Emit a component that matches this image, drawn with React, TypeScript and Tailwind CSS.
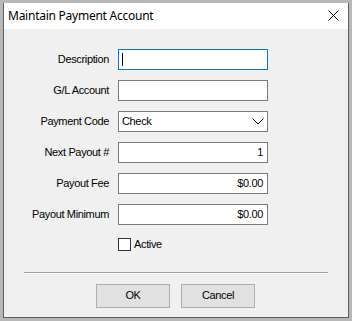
const rows = [
  { label: 'Description', value: '', focused: true },
  { label: 'G/L Account', value: '' },
  { label: 'Payment Code', value: 'Check', select: true },
  { label: 'Next Payout #', value: '1', right: true },
  { label: 'Payout Fee', value: '$0.00', right: true },
  { label: 'Payout Minimum', value: '$0.00', right: true },
];

const App = () => {
  return (
    <div className="w-[352px] h-[321px] bg-[#b8b8b8] pt-[3px] px-[3px] font-['Liberation_Sans',Arial,sans-serif] text-[11px] tracking-[-0.35px] text-black">
      <div className="w-[346px] h-[315px] flex flex-col border border-t-0 border-[#5c5c5c] bg-[#f0f0f0]">
        {/* Title bar */}
        <div className="h-[26px] bg-white flex items-center justify-between pl-[4px] pr-[9px]">
          <span className="text-[12px] font-['Noto_Sans',sans-serif] tracking-[-0.25px] leading-none">Maintain Payment Account</span>
          <svg width="11" height="11" viewBox="0 0 11 11" className="-mt-[2px]">
            <path d="M0.5 0.5 L10.5 10.5 M10.5 0.5 L0.5 10.5" stroke="#000" strokeWidth="1" />
          </svg>
        </div>

        {/* Form */}
        <div className="flex flex-col gap-[10px] pt-[20px]">
          {rows.map((row) => (
            <div key={row.label} className="flex items-center">
              <div className="w-[105px] text-right">{row.label}</div>
              <div
                className={
                  'ml-[9px] w-[150px] h-[21px] bg-white border flex items-center ' +
                  (row.focused ? 'border-[#0078d7] ' : 'border-[#7a7a7a] ') +
                  (row.right ? 'justify-end pr-[4px]' : 'pl-[3px]')
                }
              >
                {row.focused && <div className="w-px h-[13px] bg-black" />}
                {row.select ? (
                  <div className="flex-1 flex items-center justify-between pr-[3px]">
                    <span>{row.value}</span>
                    <svg width="12" height="7" viewBox="0 0 12 7">
                      <path d="M0.5 0.5 L6 6 L11.5 0.5" fill="none" stroke="#000" strokeWidth="1" />
                    </svg>
                  </div>
                ) : (
                  <span>{row.value}</span>
                )}
              </div>
            </div>
          ))}

          {/* Active checkbox */}
          <div className="flex items-center ml-[114px] mt-[1px] gap-[3px]">
            <div className="w-[13px] h-[13px] bg-white border border-[#333]" />
            <span>Active</span>
          </div>
        </div>

        {/* Separator */}
        <div className="mx-[20px] mt-[19px] border-t border-[#a0a0a0] border-b border-b-white" />

        {/* Buttons */}
        <div className="flex justify-center gap-[11px] mt-[10px] -ml-[1px]">
          <button className="w-[74px] h-[24px] bg-[#e1e1e1] border border-[#adadad]">OK</button>
          <button className="w-[74px] h-[24px] bg-[#e1e1e1] border border-[#adadad]">Cancel</button>
        </div>
      </div>
    </div>
  );
};

export default App;
